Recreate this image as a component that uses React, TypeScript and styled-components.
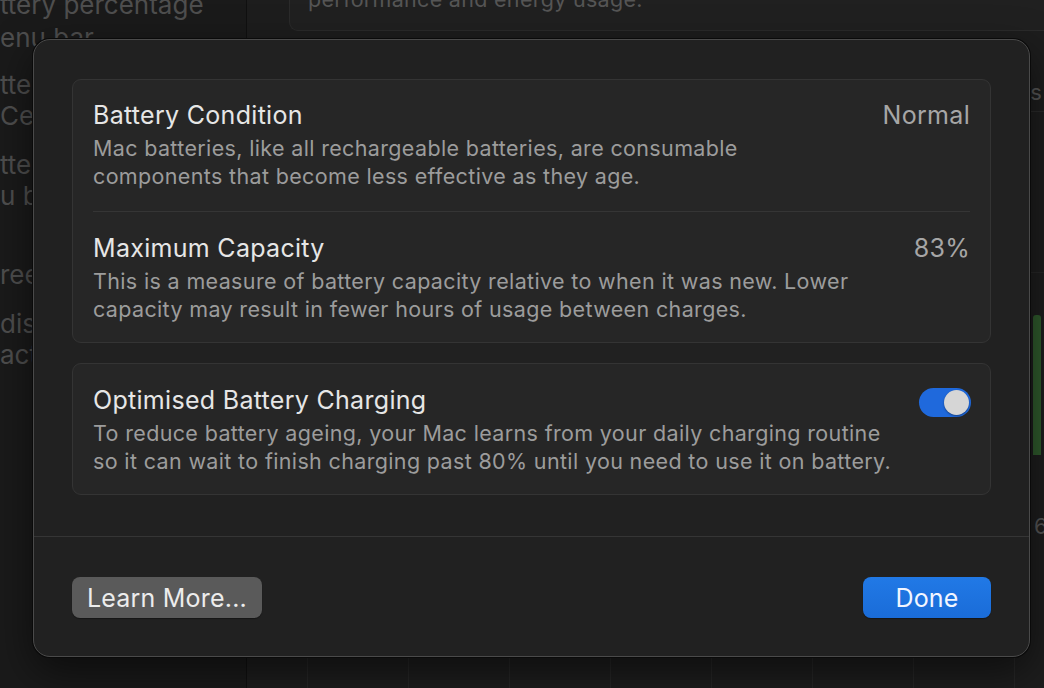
import React, { useState } from "react";
import styled, { createGlobalStyle } from "styled-components";

const GlobalStyle = createGlobalStyle`
  html, body {
    margin: 0;
    padding: 0;
    background: #1c1c1c;
    font-family: Inter, "Noto Sans", "Liberation Sans", sans-serif;
    -webkit-font-smoothing: antialiased;
  }
`;

const sidebarLines = [
  { text: "ttery percentage", gap: 0 },
  { text: "enu bar", gap: 2 },
  { text: "tte", gap: 16 },
  { text: "Cen", gap: 0 },
  { text: "tte", gap: 18 },
  { text: "u b", gap: 0 },
  { text: "ree", gap: 48 },
  { text: "dis", gap: 18 },
  { text: "act", gap: 0 },
];

const gridCols = [0, 1, 2, 3, 4, 5, 6, 7];

export default function App() {
  const [optimised, setOptimised] = useState(true);

  return (
    <>
      <GlobalStyle />
      <Window>
        <Sidebar>
          {sidebarLines.map((l, i) => (
            <SidebarLine key={i} gap={l.gap}>
              {l.text}
            </SidebarLine>
          ))}
        </Sidebar>
        <Main>
          <TopCard>performance and energy usage.</TopCard>
          <TabRow>
            <Tab>Last 10 Days</Tab>
          </TabRow>
          <Chart>
            {gridCols.map((c) => (
              <GridCol key={c}>
                {c === 7 && <Bar />}
                {c === 7 && <AxisLabel>6</AxisLabel>}
              </GridCol>
            ))}
          </Chart>
        </Main>
      </Window>

      <Dialog>
        <DialogBody>
          <Card>
            <Row>
              <RowText>
                <Title>Battery Condition</Title>
                <Desc>
                  Mac batteries, like all rechargeable batteries, are consumable
                  <br />
                  components that become less effective as they age.
                </Desc>
              </RowText>
              <Value>Normal</Value>
            </Row>
            <Separator />
            <Row last>
              <RowText>
                <Title>Maximum Capacity</Title>
                <Desc>
                  This is a measure of battery capacity relative to when it was
                  new. Lower
                  <br />
                  capacity may result in fewer hours of usage between charges.
                </Desc>
              </RowText>
              <Value>83%</Value>
            </Row>
          </Card>

          <Card>
            <Row last>
              <RowText>
                <Title>Optimised Battery Charging</Title>
                <Desc>
                  To reduce battery ageing, your Mac learns from your daily
                  charging routine
                  <br />
                  so it can wait to finish charging past 80% until you need to
                  use it on battery.
                </Desc>
              </RowText>
              <Toggle on={optimised} onClick={() => setOptimised(!optimised)}>
                <Knob on={optimised} />
              </Toggle>
            </Row>
          </Card>
        </DialogBody>

        <Footer>
          <Button>Learn More...</Button>
          <Button primary>Done</Button>
        </Footer>
      </Dialog>
    </>
  );
}

/* background settings window */

const Window = styled.div`
  display: grid;
  grid-template-columns: 247px 1fr;
  height: 688px;
  overflow: hidden;
`;

const Sidebar = styled.div`
  background: #1a1a1a;
  border-right: 1px solid #101010;
  display: flex;
  flex-direction: column;
  overflow: hidden;
  margin-top: -11px;
`;

const SidebarLine = styled.div<{ gap: number }>`
  color: #4e4e4e;
  font-size: 26px;
  line-height: 31px;
  white-space: nowrap;
  margin-top: ${(p) => p.gap}px;
`;

const Main = styled.div`
  background: #1d1d1d;
  padding-left: 42px;
  display: flex;
  flex-direction: column;
  overflow: hidden;
`;

const TopCard = styled.div`
  margin-top: -22px;
  height: 53px;
  box-sizing: border-box;
  border: 1px solid #2b2b2b;
  border-right: none;
  border-radius: 9px 0 0 9px;
  background: #202020;
  color: #555;
  font-size: 21.5px;
  letter-spacing: 0.3px;
  line-height: 28px;
  padding: 6px 18px 0;
  white-space: nowrap;
`;

const TabRow = styled.div`
  display: flex;
  justify-content: flex-end;
  margin-top: 48px;
  border-bottom: 1px solid #2a2a2a;
  padding: 0 2px 6px 0;
`;

const Tab = styled.div`
  color: #555;
  font-size: 22px;
  line-height: 26px;
  white-space: nowrap;
`;

const Chart = styled.div`
  display: flex;
  flex: 1;
  margin-top: 160px;
  margin-left: 18px;
  border-top: 1px solid #262626;
`;

const GridCol = styled.div`
  width: 100px;
  flex-shrink: 0;
  border-left: 1px solid #262626;
`;

const Bar = styled.div`
  width: 8px;
  height: 140px;
  margin-left: 18px;
  margin-top: 42px;
  background: #2f5a2c;
  border-radius: 3px 3px 0 0;
`;

const AxisLabel = styled.div`
  color: #555;
  font-size: 22px;
  margin: 58px 0 0 19px;
`;

/* dialog */

const Dialog = styled.div`
  position: absolute;
  left: 33px;
  top: 39px;
  width: 997px;
  height: 618px;
  box-sizing: border-box;
  background: #212121;
  border: 1px solid #4a4a4a;
  border-radius: 17px;
  box-shadow: 0 0 0 1px #0a0a0a, 0 14px 40px rgba(0, 0, 0, 0.55);
  display: flex;
  flex-direction: column;
`;

const DialogBody = styled.div`
  padding: 39px 38px 41px;
  display: flex;
  flex-direction: column;
  gap: 20px;
  border-bottom: 1px solid #353535;
`;

const Card = styled.div`
  background: #262626;
  border: 1px solid #343434;
  border-radius: 9px;
  padding: 0 20px;
`;

const Row = styled.div<{ last?: boolean }>`
  display: flex;
  justify-content: space-between;
  align-items: flex-start;
  padding: ${(p) => (p.last ? "22px 0 19px" : "21px 0 21px")};
`;

const RowText = styled.div`
  display: flex;
  flex-direction: column;
  gap: 5px;
`;

const Title = styled.div`
  color: #e6e6e6;
  font-size: 25px;
  letter-spacing: 0.3px;
  line-height: 28px;
  white-space: nowrap;
`;

const Desc = styled.div`
  color: #9c9c9c;
  font-size: 21.5px;
  letter-spacing: 0.35px;
  line-height: 28px;
  white-space: nowrap;
`;

const Value = styled.div`
  color: #a6a6a6;
  font-size: 25px;
  letter-spacing: 0.3px;
  line-height: 28px;
`;

const Separator = styled.div`
  height: 1px;
  background: #353535;
`;

const Toggle = styled.div<{ on: boolean }>`
  width: 52px;
  height: 29px;
  box-sizing: border-box;
  border-radius: 15px;
  background: ${(p) => (p.on ? "#1f69dc" : "#444")};
  padding: 2px;
  margin-top: 2px;
  margin-right: -1px;
  display: flex;
  justify-content: ${(p) => (p.on ? "flex-end" : "flex-start")};
  cursor: pointer;
`;

const Knob = styled.div<{ on: boolean }>`
  width: 25px;
  height: 25px;
  border-radius: 50%;
  background: #d6d6d6;
  box-shadow: 0 1px 2px rgba(0, 0, 0, 0.4);
`;

const Footer = styled.div`
  flex: 1;
  display: flex;
  justify-content: space-between;
  align-items: flex-start;
  padding: 40px 38px 0;
`;

const Button = styled.div<{ primary?: boolean }>`
  height: 41px;
  box-sizing: border-box;
  border-radius: 8px;
  padding: 0 15px;
  min-width: ${(p) => (p.primary ? "128px" : "auto")};
  display: flex;
  align-items: center;
  justify-content: center;
  font-size: 25px;
  letter-spacing: 0.2px;
  color: ${(p) => (p.primary ? "#f2f6ff" : "#ececec")};
  background: ${(p) =>
    p.primary ? "linear-gradient(#2179e6, #1a6cd8)" : "#5a5a5a"};
  box-shadow: 0 1px 1px rgba(0, 0, 0, 0.35);
  cursor: default;
`;
